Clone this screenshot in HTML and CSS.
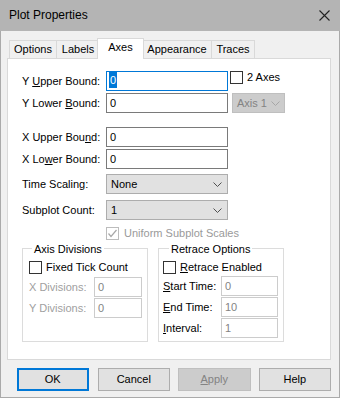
FILE: index.html
```html
<!DOCTYPE html>
<html>
<head>
<meta charset="utf-8">
<link rel="stylesheet" href="styles.css">
</head>
<body>
<div class="window">
  <div class="titlebar">
    <span class="title">Plot Properties</span>
    <svg class="close" width="11" height="11" viewBox="0 0 11 11"><path d="M0.5 0.5 L10.5 10.5 M10.5 0.5 L0.5 10.5" stroke="#222" stroke-width="1.1" fill="none"/></svg>
  </div>
  <div class="client">
    <div class="tabs">
      <div class="tab t-options">Options</div>
      <div class="tab t-labels">Labels</div>
      <div class="tab t-axes selected">Axes</div>
      <div class="tab t-appearance">Appearance</div>
      <div class="tab t-traces">Traces</div>
    </div>
    <div class="panel">
      <div class="row r1">
        <span class="lbl">Y <u>U</u>pper Bound:</span>
        <div class="edit focus"><span class="sel">0</span></div>
        <label class="chk chk-2axes"><span class="box"></span><span class="chk-text">2 Axes</span></label>
      </div>
      <div class="row r2">
        <span class="lbl">Y Lower <u>B</u>ound:</span>
        <div class="edit">0</div>
        <div class="combo disabled axis1"><span>Axis 1</span><svg width="9" height="5" viewBox="0 0 9 5"><polyline points="0.5,0.5 4.5,4.5 8.5,0.5" fill="none" stroke="#a6a6a6" stroke-width="1"/></svg></div>
      </div>
      <div class="row r3">
        <span class="lbl">X Upper Bou<u>n</u>d:</span>
        <div class="edit">0</div>
      </div>
      <div class="row r4">
        <span class="lbl">X Lo<u>w</u>er Bound:</span>
        <div class="edit">0</div>
      </div>
      <div class="row r5">
        <span class="lbl">Time Scaling:</span>
        <div class="combo wide"><span>None</span><svg width="9" height="5" viewBox="0 0 9 5"><polyline points="0.5,0.5 4.5,4.5 8.5,0.5" fill="none" stroke="#505050" stroke-width="1"/></svg></div>
      </div>
      <div class="row r6">
        <span class="lbl">Subplot Count:</span>
        <div class="combo wide"><span>1</span><svg width="9" height="5" viewBox="0 0 9 5"><polyline points="0.5,0.5 4.5,4.5 8.5,0.5" fill="none" stroke="#505050" stroke-width="1"/></svg></div>
      </div>
      <div class="row r7">
        <label class="chk disabled"><span class="box"><svg width="11" height="11" viewBox="0 0 11 11"><polyline points="1.5,5.5 4,8.5 9.5,2" fill="none" stroke="#a8a8a8" stroke-width="1.2"/></svg></span><span class="chk-text">Uniform Subplot Scales</span></label>
      </div>
      <div class="groups">
        <div class="group">
          <span class="legend">Axis Divisions</span>
          <label class="chk g-chk"><span class="box"></span><span class="chk-text">Fixed Tick Count</span></label>
          <div class="grow gx">
            <span class="glbl gray">X Divisions:</span>
            <div class="edit small disabled">0</div>
          </div>
          <div class="grow gy">
            <span class="glbl gray">Y Divisions:</span>
            <div class="edit small disabled">0</div>
          </div>
        </div>
        <div class="group retrace">
          <span class="legend">Retrace Options</span>
          <label class="chk g-chk"><span class="box"></span><span class="chk-text"><u>R</u>etrace Enabled</span></label>
          <div class="grow gs">
            <span class="glbl"><u>S</u>tart Time:</span>
            <div class="edit small2 disabled">0</div>
          </div>
          <div class="grow ge">
            <span class="glbl"><u>E</u>nd Time:</span>
            <div class="edit small2 disabled">10</div>
          </div>
          <div class="grow gi">
            <span class="glbl"><u>I</u>nterval:</span>
            <div class="edit small2 disabled">1</div>
          </div>
        </div>
      </div>
    </div>
    <div class="buttons">
      <div class="btn default">OK</div>
      <div class="btn">Cancel</div>
      <div class="btn disabled"><u>A</u>pply</div>
      <div class="btn">Help</div>
    </div>
  </div>
</div>
</body>
</html>
```
FILE: styles.css
```css
* { box-sizing: border-box; }
html, body { margin: 0; padding: 0; }
body {
  width: 340px;
  height: 398px;
  background: #f0f0f0;
  font-family: "Liberation Sans", Arial, sans-serif;
  font-size: 11px;
  color: #000;
  overflow: hidden;
}
u { text-decoration: underline; text-underline-offset: 1px; }
.window {
  width: 340px;
  height: 398px;
  border: 1px solid #aaaaaa;
  border-top: none;
  display: flex;
  flex-direction: column;
}
.titlebar {
  height: 31px;
  margin: 0 -1px;
  background: #b4b4b4;
  display: flex;
  align-items: center;
  justify-content: space-between;
  padding: 0 10px 1px 9px;
}
.title { font-size: 12px; line-height: 16px; }
.close { display: block; }
.client {
  padding: 7px 8px 0 6px;
}
.tabs {
  display: flex;
  align-items: flex-end;
  height: 20px;
  padding-left: 2px;
}
.tab {
  height: 18px;
  border: 1px solid #d9d9d9;
  border-bottom: none;
  background: #f0f0f0;
  text-align: center;
  line-height: 17px;
  margin-left: -1px;
}
.t-options { width: 48px; margin-left: 0; }
.t-labels { width: 44px; }
.t-axes { width: 47px; margin-left: -3px; }
.t-appearance { width: 70px; }
.t-traces { width: 44px; }
.tab.selected {
  position: relative;
  z-index: 1;
  height: 21px;
  margin-bottom: -1px;
  background: #fff;
  line-height: 16px;
  margin-right: -1px;
}
.panel {
  width: 324px;
  height: 302px;
  background: #fff;
  border: 1px solid #d9d9d9;
  padding: 12px 0 0 14px;
}
.row {
  display: flex;
  align-items: center;
  height: 20px;
}
.r2 { margin-top: 2px; }
.r3 { margin-top: 14px; }
.r4 { margin-top: 2px; }
.r5 { margin-top: 5px; }
.r6 { margin-top: 6px; }
.r7 { margin-top: 7px; height: 13px; padding-left: 84px; }
.lbl { width: 84px; line-height: 14px; }
.edit {
  width: 122px;
  height: 20px;
  border: 1px solid #7a7a7a;
  background: #fff;
  padding-left: 3px;
  line-height: 18px;
}
.edit.focus { border-color: #0078d7; padding-left: 2px; }
.sel {
  display: inline-block;
  background: #0078d7;
  color: #fff;
  line-height: 16px;
  padding: 0 1px;
  margin-top: 0px;
  vertical-align: top;
}
.chk {
  display: flex;
  align-items: center;
  height: 13px;
}
.box {
  width: 13px;
  height: 13px;
  border: 1px solid #333;
  background: #fff;
  display: flex;
  align-items: center;
  justify-content: center;
}
.box svg { display: block; }
.chk-text { margin-left: 4px; line-height: 13px; }
.chk.disabled .box { border-color: #bcbcbc; }
.chk.disabled .chk-text { color: #9a9a9a; margin-left: 5px; }
.chk-2axes { align-self: flex-start; margin-left: 2px; }
.combo {
  height: 20px;
  border: 1px solid #adadad;
  background: #e1e1e1;
  display: flex;
  align-items: center;
  justify-content: space-between;
  padding: 0 5px 0 4px;
}
.combo svg { display: block; }
.combo.wide { width: 122px; }
.combo.disabled {
  background: #cccccc;
  border-color: #bfbfbf;
  color: #838383;
}
.axis1 { width: 53px; margin-left: 4px; padding: 0 4px 0 4px; }
.groups {
  display: flex;
  gap: 10px;
  margin-top: 8px;
}
.group {
  width: 126px;
  height: 94px;
  border: 1px solid #dcdcdc;
  padding: 0 0 0 6px;
}
.retrace { padding-left: 4px; }
.legend {
  display: block;
  width: fit-content;
  background: #fff;
  line-height: 14px;
  margin-top: -7px;
  margin-left: 3px;
  padding: 0 2px;
}
.retrace .legend { margin-left: 6px; }
.g-chk { margin-top: 5px; }
.grow { display: flex; align-items: center; height: 20px; }
.gx { margin-top: 3px; }
.gy { margin-top: 1px; }
.gs { margin-top: 2px; }
.ge, .gi { margin-top: 1px; }
.glbl { width: 65px; line-height: 14px; }
.retrace .glbl { width: 58px; }
.gray { color: #a0a0a0; }
.edit.small { width: 48px; }
.edit.small2 { width: 57px; }
.edit.disabled { border-color: #cccccc; color: #838383; }
.buttons {
  display: flex;
  gap: 8px;
  margin-top: 8px;
  padding-left: 10px;
}
.btn {
  width: 73px;
  height: 23px;
  border: 1px solid #adadad;
  background: #e1e1e1;
  text-align: center;
  line-height: 21px;
}
.btn.default { border: 2px solid #0078d7; line-height: 19px; width: 72px; margin-right: 1px; }
.btn.disabled { background: #cccccc; border-color: #bfbfbf; color: #838383; }
```
